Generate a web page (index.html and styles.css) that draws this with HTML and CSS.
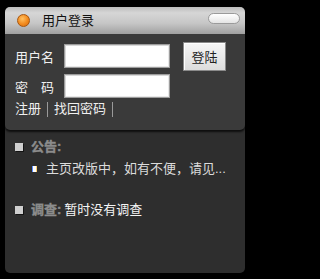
FILE: index.html
```html
<!DOCTYPE html>
<html lang="zh">
<head>
<meta charset="utf-8">
<link rel="stylesheet" href="styles.css">
</head>
<body>
<div class="panel">
  <div class="card">
    <div class="head">
      <span class="dot"></span>
      <span class="title">用户登录</span>
      <span class="pill"></span>
    </div>
    <div class="form">
      <div class="fields">
        <div class="row"><span class="lbl">用户名</span><input class="inp" type="text"></div>
        <div class="row"><span class="lbl">密&emsp;码</span><input class="inp" type="password"></div>
      </div>
      <button class="btn">登陆</button>
    </div>
    <div class="links"><span>注册</span><i class="sep"></i><span>找回密码</span><i class="sep"></i></div>
  </div>
  <div class="info">
    <div class="line"><span class="sq"></span><span class="key">公告:</span></div>
    <div class="line sub"><span class="sq2"></span><span class="txt">主页改版中，如有不便，请见...</span></div>
    <div class="line gap"><span class="sq"></span><span class="key">调查:</span><span class="val">暂时没有调查</span></div>
  </div>
</div>
</body>
</html>
```

FILE: styles.css
```css
html, body {
  margin: 0;
  padding: 0;
  background: #000;
}
body {
  font-family: "Liberation Sans", "Noto Sans CJK SC", sans-serif;
  font-size: 13px;
}
.panel {
  margin: 7px 0 0 5px;
  width: 240px;
  height: 266px;
  background: #2e2e2e;
  border-radius: 5px;
}
.card {
  background: #3a3a3a;
  border-radius: 5px;
  box-shadow: 0 2px 2px rgba(0, 0, 0, 0.7);
  height: 123px;
  display: flex;
  flex-direction: column;
}
.head {
  height: 27px;
  border-radius: 5px 5px 0 0;
  background: linear-gradient(#bdbdbd, #d6d6d6 22%, #c6c6c6 60%, #a0a0a0);
  display: flex;
  align-items: center;
  padding-left: 12px;
}
.dot {
  width: 11px;
  height: 11px;
  border-radius: 50%;
  border: 1px solid #a8560e;
  background: radial-gradient(circle at 40% 35%, #ffc060, #f28a1e 55%, #d66a0c);
}
.title {
  margin-left: 12px;
  color: #111;
  font-size: 13px;
  line-height: 16px;
}
.pill {
  margin-left: auto;
  margin-right: 5px;
  margin-top: -4px;
  width: 30px;
  height: 9px;
  border-radius: 6px;
  border: 1px solid #9a9a9a;
  background: linear-gradient(#ffffff, #e4e4e4);
}
.form {
  display: flex;
  padding: 10px 0 0 10px;
}
.fields {
  display: flex;
  flex-direction: column;
  gap: 6px;
}
.row {
  display: flex;
  height: 24px;
}
.lbl {
  width: 49px;
  color: #f0f0f0;
  line-height: 20px;
  padding-top: 4px;
  white-space: nowrap;
}
.inp {
  box-sizing: border-box;
  width: 106px;
  height: 24px;
  margin: 0;
  padding: 0 3px;
  border: 1px solid #9c9c9c;
  box-shadow: inset 1px 1px 0 #d8d8d8, inset -1px -1px 0 #e8e8e8;
  background: #fff;
  outline: none;
}
.btn {
  box-sizing: border-box;
  margin: -2px 0 0 13px;
  width: 43px;
  height: 29px;
  padding: 0;
  border: 1px solid #8a8a8a;
  box-shadow: inset 1px 1px 0 #fff;
  background: linear-gradient(#f6f6f6, #dcdcdc);
  color: #222;
  font-family: "Liberation Sans", "Noto Sans CJK SC", sans-serif;
  font-size: 13px;
}
.links {
  display: flex;
  align-items: center;
  margin-top: 3px;
  padding-left: 10px;
  color: #f0f0f0;
  line-height: 16px;
}
.sep {
  width: 1px;
  height: 15px;
  background: #9a9a9a;
  margin: 0 6px;
}
.info {
  padding: 9px 0 0 10px;
}
.line {
  display: flex;
  align-items: center;
  line-height: 16px;
}
.sub {
  margin-top: 6px;
  padding-left: 17px;
}
.gap {
  margin-top: 25px;
}
.sq {
  width: 8px;
  height: 8px;
  background: #cfcfcf;
  box-shadow: 1px 1px 0 #141414;
  margin-right: 8px;
}
.sq2 {
  width: 5px;
  height: 6px;
  background: linear-gradient(90deg, #5a8cff 0 1px, #ffffff 1px 4px, #ffd070 4px);
  margin-right: 9px;
}
.key {
  color: #8c8c8c;
  font-weight: bold;
  -webkit-text-stroke: 0.4px #8c8c8c;
}
.txt {
  color: #dcdcdc;
}
.val {
  color: #f4f4f4;
  margin-left: 3px;
}
```
